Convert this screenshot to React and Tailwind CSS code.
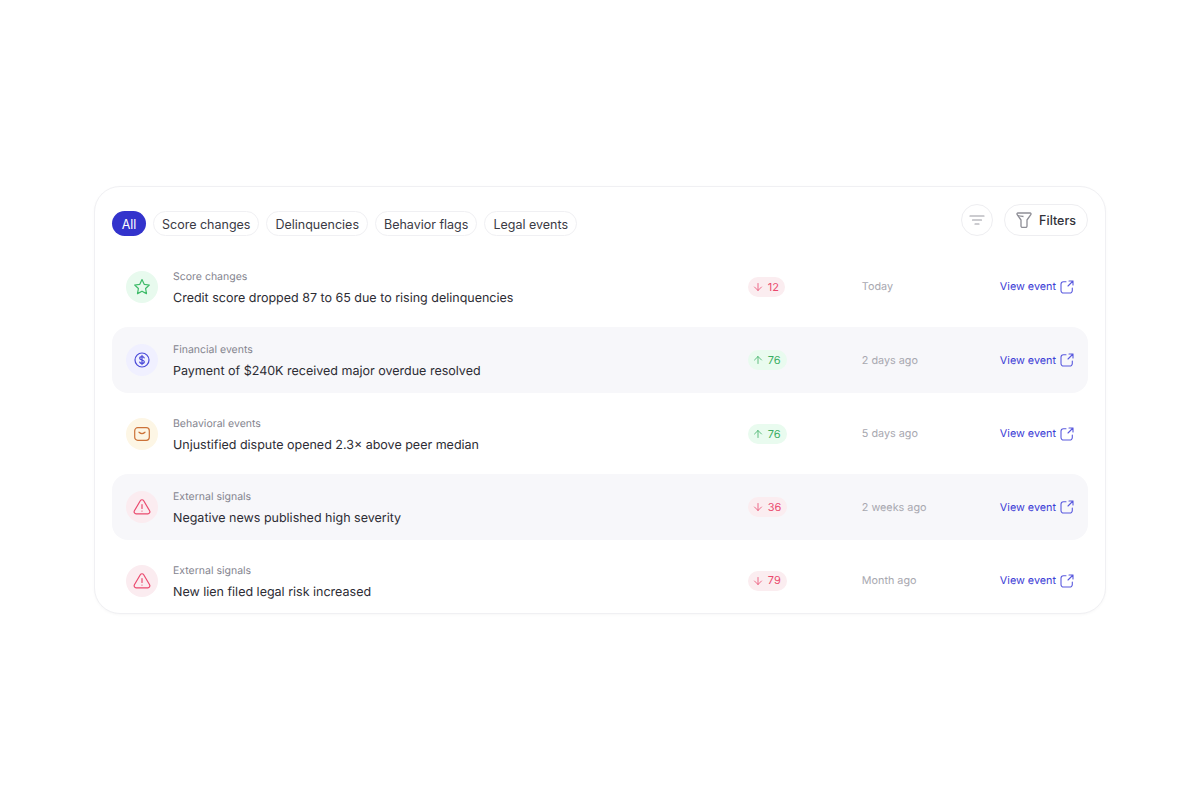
import { ArrowDown, ArrowUp } from "lucide-react";

const chips = ["Score changes", "Delinquencies", "Behavior flags", "Legal events"];

const events = [
  { kind: "star", category: "Score changes", title: "Credit score dropped 87 to 65 due to rising delinquencies", dir: "down", value: 12, time: "Today" },
  { kind: "dollar", category: "Financial events", title: "Payment of $240K received major overdue resolved", dir: "up", value: 76, time: "2 days ago" },
  { kind: "mail", category: "Behavioral events", title: "Unjustified dispute opened 2.3× above peer median", dir: "up", value: 76, time: "5 days ago" },
  { kind: "alert", category: "External signals", title: "Negative news published high severity", dir: "down", value: 36, time: "2 weeks ago" },
  { kind: "alert", category: "External signals", title: "New lien filed legal risk increased", dir: "down", value: 79, time: "Month ago" },
];

function EventIcon({ kind }) {
  if (kind === "star") {
    return (
      <div className="flex h-8 w-8 shrink-0 items-center justify-center rounded-full bg-[#e8faee]">
        <svg width="18" height="18" viewBox="0 0 18 18" fill="none" stroke="#3dbb68" strokeWidth="1.2" strokeLinejoin="round">
          <path d="M9 1.600l2.200 4.700 5.100.7-3.700 3.500.9 5.100L9 13.200l-4.500 2.400.9-5.100L1.700 7l5.100-.7z" />
        </svg>
      </div>
    );
  }
  if (kind === "dollar") {
    return (
      <div className="flex h-8 w-8 shrink-0 items-center justify-center rounded-full bg-[#f0f0ff]">
        <svg width="16" height="16" viewBox="0 0 16 16" fill="none" stroke="#4a4ad8" strokeWidth="1.2" strokeLinecap="round">
          <circle cx="8" cy="8" r="7" />
          <path d="M10.200 5.900C10 5 9.100 4.600 8 4.600c-1.300 0-2.300.6-2.300 1.700 0 2.300 4.600 1.100 4.600 3.400 0 1.100-1 1.700-2.300 1.700-1.200 0-2.100-.5-2.300-1.400M8 3.400v9.200" />
        </svg>
      </div>
    );
  }
  if (kind === "mail") {
    return (
      <div className="flex h-8 w-8 shrink-0 items-center justify-center rounded-full bg-[#fdf6e5]">
        <svg width="16" height="14" viewBox="0 0 16 14" fill="none" stroke="#cc7238" strokeWidth="1.2" strokeLinecap="round" strokeLinejoin="round">
          <rect x="0.700" y="0.700" width="14.600" height="12.600" rx="3" />
          <path d="M5 5.200c1.700 1.500 4.300 1.500 6 0" />
        </svg>
      </div>
    );
  }
  return (
    <div className="flex h-8 w-8 shrink-0 items-center justify-center rounded-full bg-[#fbecf0]">
      <svg width="18" height="16" viewBox="0 0 18 16" fill="none" stroke="#ea4a6e" strokeWidth="1.2" strokeLinecap="round" strokeLinejoin="round">
        <path d="M7.300 1.700a2 2 0 0 1 3.400 0l5.900 10.100a2 2 0 0 1-1.700 3H3.100a2 2 0 0 1-1.700-3z" />
        <path d="M9 5.500v4M9 12v.1" />
      </svg>
    </div>
  );
}

function Badge({ dir, value }) {
  const up = dir === "up";
  return (
    <div className={`inline-flex h-5 items-center gap-[4px] rounded-full pl-[4px] pr-[6px] text-[11px] font-normal ${up ? "bg-[#e9fbef] text-[#3aae63]" : "bg-[#fbedf0] text-[#ea4a6e]"}`}>
      {up ? <ArrowUp size={12} strokeWidth={1.6} /> : <ArrowDown size={12} strokeWidth={1.6} />}
      {value}
    </div>
  );
}

export default function App() {
  return (
    <div className="flex min-h-screen items-center justify-center bg-white font-['Inter',sans-serif] [text-rendering:geometricPrecision]">
      <div className="h-[428px] w-[1012px] rounded-[26px] border border-[#f0f0f3] bg-white px-[17px] pt-[17px] shadow-[0_1px_3px_rgba(20,20,40,0.03)]">
        {/* TOP BAR */}
        <div className="flex items-end justify-between">
          <div className="flex items-center gap-[7px]">
            <button className="h-[25px] w-[34px] rounded-full bg-[#3333cc] pt-[3px] text-[12.5px] text-white">All</button>
            {chips.map((chip) => (
              <button key={chip} className="h-[25px] rounded-full border border-[#f0f0f3] px-[8px] pt-[3px] text-[12.5px] text-[#3a3a44]">
                {chip}
              </button>
            ))}
          </div>
          <div className="flex items-center gap-[11px]">
            <button className="flex h-8 w-8 items-center justify-center rounded-full border border-[#eeeef1]">
              <svg width="16" height="10" viewBox="0 0 16 10" fill="none" stroke="#9a9aa2" strokeWidth="1.2" strokeLinecap="round">
                <path d="M1 1h14M3.500 5h9M6 9h4" />
              </svg>
            </button>
            <button className="flex h-8 items-center gap-[7px] rounded-full border border-[#eeeef1] px-[11px] text-[12.5px] font-medium text-[#32323a]">
              <svg width="16" height="16" viewBox="0 0 16 16" fill="none" stroke="#8e8e96" strokeWidth="1.300" strokeLinejoin="round">
                <path d="M2 1h12c.9 0 1.300 1 .8 1.700L11 8v6c0 .8-.7 1.500-1.500 1.500h-3C5.700 15.500 5 14.800 5 14V8L1.200 2.700C.7 2 1.100 1 2 1z" />
                <path d="M1.500 3.500c2 .6 4 .8 6 1" />
              </svg>
              <span className="pt-[2px]">Filters</span>
            </button>
          </div>
        </div>

        {/* EVENTS */}
        <div className="mt-[18px] flex flex-col gap-[7.4px]">
          {events.map((ev, i) => (
            <div key={i} className={`flex h-[66px] items-center rounded-[16px] px-[14px] ${i % 2 === 1 ? "bg-[#f7f7fa]" : ""}`}>
              <EventIcon kind={ev.kind} />
              <div className="ml-[15px] min-w-0 flex-1 pt-[3px]">
                <div className="text-[10.5px] leading-[14px] text-[#85858f]">{ev.category}</div>
                <div className="mt-[7px] text-[12.5px] leading-[16px] text-[#2c2c34]">{ev.title}</div>
              </div>
              <div className="w-[114px]">
                <Badge dir={ev.dir} value={ev.value} />
              </div>
              <div className="w-[138px] pt-px text-[10.8px] text-[#a8a8b0]">{ev.time}</div>
              <a className="flex items-center gap-[4px] text-[10.8px] text-[#3d3dd6]">
                <span className="pt-px">View event</span>
                <svg width="14" height="14" viewBox="0 0 14 14" fill="none" stroke="#5a5ade" strokeWidth="1.100" strokeLinecap="round" strokeLinejoin="round">
                  <path d="M6 1.700H3.500A2.500 2.500 0 0 0 1 4.200v6.300A2.500 2.500 0 0 0 3.500 13h6.300a2.500 2.500 0 0 0 2.500-2.500V8" />
                  <path d="M9 1h4v4M13 1L8 6" />
                </svg>
              </a>
            </div>
          ))}
        </div>
      </div>
    </div>
  );
}
